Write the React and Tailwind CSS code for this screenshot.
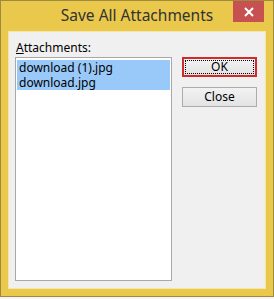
export default function App() {
  const files = ['download (1).jpg', 'download.jpg']

  return (
    <div className="w-[274px] h-[299px] bg-[#f4f4f4]" style={{ fontFamily: '"Noto Sans", "Open Sans", sans-serif' }}>
      <div className="relative w-[274px] h-[297px] border border-[#9e8a3e] bg-[#e9c84c] flex flex-col">
        {/* title bar */}
        <div className="h-[30px] flex items-center justify-center text-[15.5px] text-[#333] pb-[1px]">
          Save All Attachments
        </div>
        <div className="absolute top-0 right-[9px] w-[31px] h-[21px] bg-[#c75050] flex items-center justify-center">
          <svg width="10" height="10" viewBox="0 0 10 10">
            <path d="M1 1 L9 9 M9 1 L1 9" stroke="#fff" strokeWidth="2" />
          </svg>
        </div>

        {/* client area */}
        <div className="mx-[7px] mb-[7px] flex-1 bg-[#f0f0f0] border border-[#f5e6a8] flex px-[6px] pt-[8px] pb-[7px] text-[12px] text-black">
          <div className="w-[157px] flex flex-col">
            <div className="leading-[15px] pl-[1px] mb-[2px]">
              <span className="underline">A</span>ttachments:
            </div>
            <div className="flex-1 bg-white border border-[#a8a8a8] p-[1px] pt-[2px]">
              <div className="bg-[#99c9f9] pl-[2px] text-[12px] leading-[15px] whitespace-pre-line">
                {files.join('\n')}
              </div>
            </div>
          </div>
          <div className="ml-[10px] pt-[17px] flex flex-col gap-[10px]">
            <div className="w-[75px] h-[20px] border-2 border-[#d22a2a] bg-gradient-to-b from-[#f2f2f2] to-[#e3e3e3] p-[1px]">
              <div className="h-full border border-dotted border-black flex items-center justify-center leading-none">
                OK
              </div>
            </div>
            <div className="w-[75px] h-[20px] border border-[#acacac] bg-gradient-to-b from-[#f2f2f2] to-[#e3e3e3] flex items-center justify-center leading-none">
              Close
            </div>
          </div>
        </div>
      </div>
    </div>
  )
}
